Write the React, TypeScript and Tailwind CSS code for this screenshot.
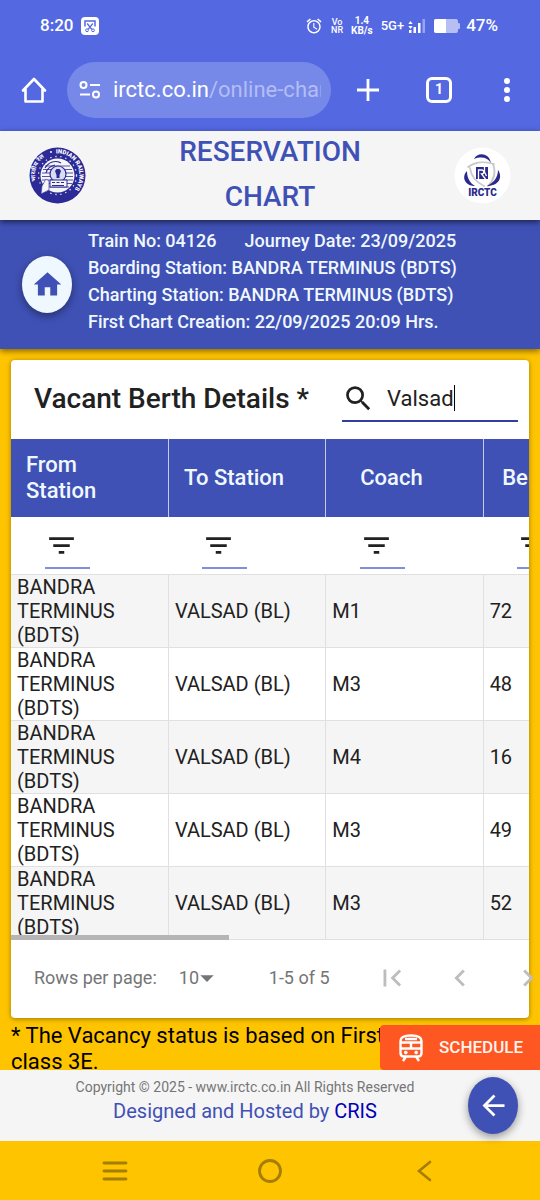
import { useState } from 'react'
import {
  MdAlarm,
  MdArrowBack,
  MdArrowDropDown,
  MdChevronLeft,
  MdChevronRight,
  MdFilterList,
  MdFirstPage,
  MdHome,
  MdSearch,
} from 'react-icons/md'

const berths = [
  { id: 1, from: 'BANDRA TERMINUS (BDTS)', to: 'VALSAD (BL)', coach: 'M1', berth: 72 },
  { id: 2, from: 'BANDRA TERMINUS (BDTS)', to: 'VALSAD (BL)', coach: 'M3', berth: 48 },
  { id: 3, from: 'BANDRA TERMINUS (BDTS)', to: 'VALSAD (BL)', coach: 'M4', berth: 16 },
  { id: 4, from: 'BANDRA TERMINUS (BDTS)', to: 'VALSAD (BL)', coach: 'M3', berth: 49 },
  { id: 5, from: 'BANDRA TERMINUS (BDTS)', to: 'VALSAD (BL)', coach: 'M3', berth: 52 },
]

const columns = ['From Station', 'To Station', 'Coach', 'Berth No.']

function StatusBar() {
  return (
    <div className="flex h-[52px] items-center justify-between pl-10 pr-[42px] font-medium text-white">
      <div className="flex items-center gap-2">
        <span className="text-[17px]">8:20</span>
        <svg width="18" height="18" viewBox="0 0 18 18" fill="none">
          <rect width="18" height="18" rx="4" fill="#fff" />
          <path d="M4 9.5V4h10v5.5" stroke="#5468e2" strokeWidth="1.5" />
          <path d="M6.2 6.5l4.6 5.8M11.8 6.5l-4.6 5.8" stroke="#5468e2" strokeWidth="1.3" />
          <circle cx="6" cy="13.3" r="1.4" stroke="#5468e2" />
          <circle cx="12" cy="13.3" r="1.4" stroke="#5468e2" />
        </svg>
      </div>
      <div className="flex items-center">
        <MdAlarm className="mr-2 size-[18px]" />
        <div className="mr-2 text-center text-[9px] leading-[8px]">
          Vo
          <br />
          NR
        </div>
        <div className="mr-2 text-center text-[10px] font-bold leading-[10px]">
          1.4
          <br />
          KB/s
        </div>
        <span className="mr-1 text-[13px]">5G+</span>
        <svg className="mr-2" width="18" height="16" viewBox="0 0 18 16" fill="#fff">
          <path d="M2.5 3l2.2 3H.3zM2.5 11L.3 8h4.400z" />
          <rect x="1" y="12" width="2.5" height="3" />
          <rect x="5.5" y="9" width="2.5" height="6" />
          <rect x="10" y="5" width="2.5" height="10" />
          <rect x="14.5" y="1" width="2.5" height="14" opacity=".4" />
        </svg>
        <svg width="26" height="14" viewBox="0 0 26 14">
          <rect width="24" height="14" rx="2" fill="#b6bff3" />
          <path d="M24 4a3 3 0 0 1 0 6z" fill="#b6bff3" />
          <path d="M2 0h10v14H2a2 2 0 0 1-2-2V2a2 2 0 0 1 2-2z" fill="#fff" />
        </svg>
        <span className="ml-1.5 text-[17px]">47%</span>
      </div>
    </div>
  )
}

function BrowserBar() {
  return (
    <div className="flex h-[79px] items-center pb-1 pl-[21px] pr-[22px] text-white">
      <button aria-label="Home page" className="mr-5">
        <svg width="26" height="28" viewBox="0 0 26 28" fill="none" stroke="#fff" strokeWidth="2.6" strokeLinejoin="round" strokeLinecap="round">
          <path d="M2 14.5L13 3l11 11.5M4.5 13v12.5h17V13" />
        </svg>
      </button>
      <button className="flex h-14 flex-1 items-center overflow-hidden rounded-full bg-[#7689e9] pl-3 pr-[10px] text-left">
        <svg className="mr-3 shrink-0" width="22" height="20" viewBox="0 0 22 20" fill="none" stroke="#fff" strokeWidth="2">
          <circle cx="4.5" cy="5" r="3" />
          <path d="M11 5h10M1 14.5h10" />
          <circle cx="17" cy="14.5" r="3" />
        </svg>
        <span className="overflow-hidden whitespace-nowrap text-[22px]">
          irctc.co.in<span className="text-[#b3bdf4]">/online-charts</span>
        </span>
      </button>
      <button aria-label="New tab" className="ml-[25px]">
        <svg width="24" height="24" viewBox="0 0 24 24" stroke="#fff" strokeWidth="2.8">
          <path d="M12 1v22M1 12h22" />
        </svg>
      </button>
      <button
        aria-label="Open tabs"
        className="ml-[46px] flex size-[26px] items-center justify-center rounded-md border-[3px] border-white text-[14px] font-bold"
      >
        1
      </button>
      <button aria-label="More" className="ml-11">
        <svg width="22" height="26" viewBox="0 0 22 26" fill="#fff">
          <circle cx="11" cy="4" r="3" />
          <circle cx="11" cy="13" r="3" />
          <circle cx="11" cy="22" r="3" />
        </svg>
      </button>
    </div>
  )
}

function RailwaysLogo() {
  return (
    <svg width="57" height="57" viewBox="0 0 57 57" role="img" aria-label="Indian Railways">
      <defs>
        <path id="ringRight" d="M27 6.500a22 22 0 0 1 13 40.700" />
        <path id="ringLeft" d="M7 34A22 22 0 0 1 23 6.500" />
      </defs>
      <circle cx="28.5" cy="28.5" r="28" fill="#2b2a96" />
      <circle cx="28.5" cy="28.5" r="19" fill="none" stroke="#e8e8f6" strokeWidth="1.3" strokeDasharray="1.3 3.8" />
      <circle cx="28.5" cy="28.5" r="17" fill="#f5f5f5" />
      <g stroke="#2b2a96" strokeWidth=".8" fill="none">
        <path d="M16 19h25M14 22.5h29M13 26h31M13 29.5h31M13 33h31M14 36.5h29M17 40h23" />
        <circle cx="29" cy="27" r="8" fill="#dcdcf0" strokeWidth="1.2" />
      </g>
      <path d="M21 33h17v7H21z" fill="#f5f5f5" stroke="#2b2a96" />
      <path d="M23 35.5h3M27.5 35.5h3M32 35.5h3M23 38.5h12" stroke="#2b2a96" strokeWidth="1.2" />
      <path d="M27.5 31v-3l-1.5-4 1.5-2h3l1.5 2-1.5 4v3z" fill="#2b2a96" />
      <path d="M13 39l4-7 3 2v9l-8 4z" fill="#f5f5f5" stroke="#2b2a96" strokeWidth=".6" />
      <path d="M16 21c4-6 10-8 16-5M17 26c1-5 5-7 9-8" fill="none" stroke="#2b2a96" strokeWidth="1.2" />
      <text fill="#fff" fontSize="6" fontWeight="900">
        <textPath href="#ringRight">INDIAN RAILWAYS</textPath>
      </text>
      <text fill="#fff" fontSize="6" fontWeight="700">
        <textPath href="#ringLeft">भारतीय रेल</textPath>
      </text>
      <circle cx="22" cy="5" r="1" fill="#fff" />
    </svg>
  )
}

function IrctcLogo() {
  return (
    <svg width="57" height="57" viewBox="0 0 57 57" role="img" aria-label="IRCTC">
      <circle cx="28.5" cy="28.5" r="28" fill="#fff" />
      <g fill="none" stroke="#c9c9c9" strokeWidth="1.8" strokeLinecap="round">
        <path d="M14 20c7-5 17-6 26-3" />
        <path d="M39 17c3 8 1 16-5 22" />
        <path d="M16 21c1 8 6 14 14 18" />
      </g>
      <g fill="#2b2a8c">
        <path d="M20 12c3-7 15-7 17 4-3-5-9-7-17-4z" />
        <path d="M13 24c-6 6-2 15 8 15-5-3-8-8-8-15z" />
        <path d="M44 23c5 7 1 16-11 16 6-3 11-8 11-16z" />
        <rect x="22" y="20" width="12" height="12" />
      </g>
      <path d="M24.5 32v-9h3c3 0 3 4 0 4l4 5M30.5 20v5l2 4" fill="none" stroke="#fff" strokeWidth="1.3" />
      <text x="28.5" y="49" textAnchor="middle" fontSize="10" fontWeight="900" fill="#2b2a8c">
        IRCTC
      </text>
    </svg>
  )
}

function TrainHeader() {
  return (
    <>
      <header className="relative z-20 flex h-[89px] items-center justify-between bg-[#f5f5f5] px-[29px] shadow-[0_2px_6px_rgba(0,0,0,0.6)]">
        <RailwaysLogo />
        <h1 className="w-[200px] pb-[3px] text-center text-[28px] font-medium leading-[45px] text-[#3f51b5]">
          RESERVATION CHART
        </h1>
        <IrctcLogo />
      </header>
      <section className="relative z-10 flex items-center bg-[#3f51b5] pb-[14px] pl-[22px] pt-[7px] shadow-[0_2px_6px_rgba(0,0,0,0.5)]">
        <button
          aria-label="Home"
          className="mr-4 mt-1.5 flex h-[57px] w-[50px] items-center justify-center rounded-[50%] bg-[#f0f8ff] text-[#3f51b5] shadow-[0_3px_8px_rgba(0,0,0,0.4)]"
        >
          <MdHome className="size-[33px]" />
        </button>
        <div className="text-[18px] font-medium leading-[27px] text-[#f0f8ff]">
          <p>
            <span className="mr-7">Train No: 04126</span>
            <span>Journey Date: 23/09/2025</span>
          </p>
          <p>Boarding Station: BANDRA TERMINUS (BDTS)</p>
          <p>Charting Station: BANDRA TERMINUS (BDTS)</p>
          <p>First Chart Creation: 22/09/2025 20:09 Hrs.</p>
        </div>
      </section>
    </>
  )
}

function BerthCard() {
  const [search, setSearch] = useState('Valsad')

  return (
    <div className="mx-[11px] mt-[11px] rounded bg-white shadow-[0_1px_5px_rgba(0,0,0,0.4)]">
      <div className="flex h-[79px] items-center justify-between pb-px pl-[23px] pr-[11px]">
        <h2 className="whitespace-nowrap text-[28px] font-medium text-[#212121]">Vacant Berth Details *</h2>
        <label className="flex h-[46px] w-[176px] items-center border-b-2 border-[#303f9f] text-[#212121]">
          <MdSearch className="mr-3 size-[33px]" />
          <input
            aria-label="Search"
            className="field-sizing-content bg-transparent text-[22px] outline-none"
            value={search}
            onChange={e => setSearch(e.target.value)}
          />
          <span className="h-[26px] w-px bg-black" />
        </label>
      </div>

      <div className="relative overflow-hidden">
        <table className="w-[630px] table-fixed border-collapse text-left text-[#212121]">
          <thead>
            <tr className="h-[78px] bg-[#3f51b5]">
              {columns.map(name => (
                <th key={name} className="border-r border-[#c5cae9] px-[15px] text-[22px] font-medium leading-[26px] text-[#f0f8ff]">
                  <div className="flex justify-center pr-[26px]">
                    <span>{name}</span>
                  </div>
                </th>
              ))}
            </tr>
          </thead>
          <tbody className="text-[20px] leading-[24px]">
            <tr className="h-[57px]">
              {columns.map(name => (
                <td key={name} className="pb-[5px] pl-[34px] align-bottom">
                  <label className="flex h-[45px] w-[45px] items-center border-b-2 border-[#7f8fdb]">
                    <MdFilterList className="size-[33px] shrink-0" />
                    <input aria-label={`Filter by ${name}`} className="w-3 bg-transparent outline-none" />
                  </label>
                </td>
              ))}
            </tr>
            {berths.map(row => (
              <tr key={row.id} className="h-[73px] border-y border-[#e0e0e0] odd:bg-white even:bg-[#f5f5f5]">
                <td className="border-r border-[#e0e0e0] pl-[6px] pr-9">{row.from}</td>
                <td className="border-r border-[#e0e0e0] px-[6px]">{row.to}</td>
                <td className="border-r border-[#e0e0e0] px-[6px]">{row.coach}</td>
                <td className="px-[6px]">{row.berth}</td>
              </tr>
            ))}
          </tbody>
        </table>
        {/* horizontal scroll thumb */}
        <div className="absolute bottom-0 left-0 h-[5px] w-[42%] bg-[#b5b5b5]" />
      </div>

      <div className="flex h-[78px] items-center whitespace-nowrap pb-0.5 pl-[23px] text-[18px] text-[#757575]">
        <label htmlFor="page-size">Rows per page:</label>
        <div className="relative ml-[22px] flex items-center">
          <select id="page-size" className="w-10 appearance-none bg-transparent outline-none">
            <option>10</option>
          </select>
          <MdArrowDropDown className="pointer-events-none absolute left-3 size-8" />
        </div>
        <span className="ml-[50px] flex-1">1-5 of 5</span>
        <div className="-mr-4 flex text-[#bdbdbd]">
          <button aria-label="First page" className="mr-[34px]">
            <MdFirstPage className="size-[34px]" />
          </button>
          <button aria-label="Previous page" className="mr-[34px]">
            <MdChevronLeft className="size-[34px]" />
          </button>
          <button aria-label="Next page">
            <MdChevronRight className="size-[34px]" />
          </button>
        </div>
      </div>
    </div>
  )
}

function ScheduleButton() {
  return (
    <button className="absolute bottom-0 right-0 flex h-[45px] w-[160px] items-center rounded-l bg-[#ff5722] pl-[19px] text-[17px] font-medium text-[#fff4ee]">
      <svg className="mr-4 shrink-0" width="24" height="28" viewBox="0 0 24 28" fill="none" stroke="#fff" strokeWidth="2.4">
        <path d="M1.5 7c0-4 4-5.500 10.500-5.500S22.500 3 22.500 7v12c0 2-1.500 3.500-3.500 3.500H5c-2 0-3.500-1.500-3.500-3.500zM6 5h12M2 8.500h20M2 14.500h20M12 8.500v6M7 22.500L4 27M17 22.500l3 4.500" />
        <circle cx="6.8" cy="18.5" r="1.4" fill="#fff" strokeWidth="1" />
        <circle cx="17.2" cy="18.5" r="1.4" fill="#fff" strokeWidth="1" />
      </svg>
      SCHEDULE
    </button>
  )
}

function Footer() {
  return (
    <footer className="relative h-[71px] bg-[#f5f5f5] pr-[50px] pt-[7px] text-center">
      <p className="text-[14px] leading-[20px] text-[#757575]">
        Copyright © 2025 - www.irctc.co.in All Rights Reserved
      </p>
      <p className="text-[20px] leading-[28px] text-[#3f51b5]">
        Designed and Hosted by{' '}
        <a href="#cris" className="text-[#0000b5]">
          CRIS
        </a>
      </p>
      <button
        aria-label="Back"
        className="absolute right-[22px] top-[7px] flex h-[57px] w-[50px] items-center justify-center rounded-[50%] bg-[#3f51b5] text-white shadow-[0_3px_8px_rgba(0,0,0,0.4)]"
      >
        <MdArrowBack className="size-[33px]" />
      </button>
    </footer>
  )
}

function SystemNav() {
  return (
    <nav className="flex h-[59px] items-center justify-between bg-[#ffc400] px-[102px]">
      <button aria-label="Recent apps">
        <svg width="26" height="24" viewBox="0 0 26 24" stroke="#a37e00" strokeWidth="2.8" strokeLinecap="round">
          <path d="M2 4h22M2 12h22M2 20h22" />
        </svg>
      </button>
      <button aria-label="Home screen">
        <svg width="26" height="26" viewBox="0 0 26 26" fill="none" stroke="#a37e00" strokeWidth="2.8">
          <circle cx="13" cy="13" r="10.5" />
        </svg>
      </button>
      <button aria-label="Go back">
        <svg width="26" height="24" viewBox="0 0 26 24" fill="none" stroke="#a37e00" strokeWidth="2.6" strokeLinecap="round">
          <path d="M18 3L7 12l11 9" />
        </svg>
      </button>
    </nav>
  )
}

export default function App() {
  return (
    <div className="flex h-screen flex-col overflow-hidden bg-[#ffc400] font-['Roboto','Noto_Sans',sans-serif]">
      <div className="bg-[#5468e2]">
        <StatusBar />
        <BrowserBar />
      </div>
      <TrainHeader />
      <main className="relative flex-1 overflow-hidden">
        <BerthCard />
        <p className="mt-[5px] pl-[11px] text-[22px] leading-[26px] text-black">
          * The Vacancy status is based on First Charting for class 3E.
        </p>
        <ScheduleButton />
      </main>
      <Footer />
      <SystemNav />
    </div>
  )
}
